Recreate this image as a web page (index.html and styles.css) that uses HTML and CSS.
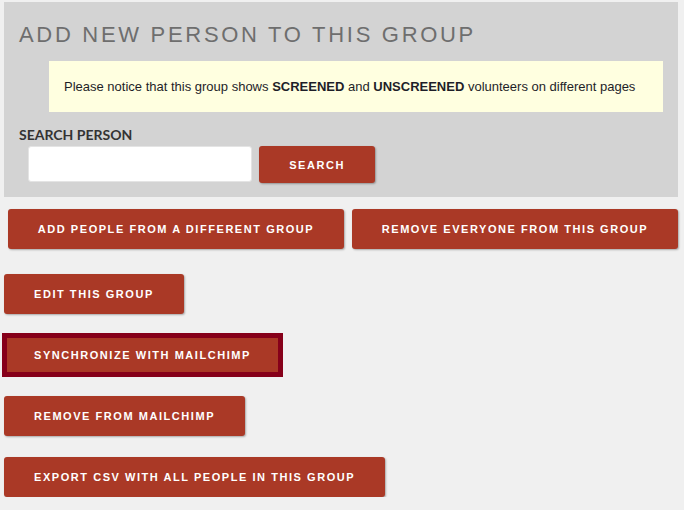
FILE: index.html
```html
<!DOCTYPE html>
<html lang="en">
<head>
    <meta charset="UTF-8">
    <meta name="viewport" content="width=device-width, initial-scale=1.0">
    <title>Group members</title>
    <link rel="stylesheet" href="styles.css">
</head>
<body>
    <div class="add-panel">
        <h1 class="panel-title">ADD NEW PERSON TO THIS GROUP</h1>

        <div class="notice">
            Please notice that this group shows <b>SCREENED</b> and <b>UNSCREENED</b> volunteers on different pages
        </div>

        <label class="search-label" for="personSearch">SEARCH PERSON</label>
        <div class="search-row">
            <input type="text" id="personSearch" class="search-input">
            <button class="btn btn-search">SEARCH</button>
        </div>
    </div>

    <div class="btn-row">
        <button class="btn">ADD PEOPLE FROM A DIFFERENT GROUP</button>
        <button class="btn">REMOVE EVERYONE FROM THIS GROUP</button>
    </div>

    <div class="btn-stack">
        <button class="btn">EDIT THIS GROUP</button>
        <button class="btn btn-active">SYNCHRONIZE WITH MAILCHIMP</button>
        <button class="btn">REMOVE FROM MAILCHIMP</button>
        <button class="btn">EXPORT CSV WITH ALL PEOPLE IN THIS GROUP</button>
    </div>
</body>
</html>
```

FILE: styles.css
```css
body {
    margin: 0;
    padding: 2px 6px 0 4px;
    background-color: #f0f0f0;
    font-family: "Liberation Sans", Arial, sans-serif;
}

.add-panel {
    background-color: #d3d3d3;
    padding: 20px 15px 14px 15px;
}

.panel-title {
    margin: 0;
    font-size: 22px;
    line-height: 26px;
    font-weight: normal;
    letter-spacing: 2.7px;
    color: #6e6e6e;
}

.notice {
    margin: 13px 0 0 30px;
    padding: 18px 15px 17px 15px;
    background-color: #ffffe0;
    font-size: 13px;
    line-height: 16px;
    color: #1e1e28;
}

.search-label {
    display: block;
    margin-top: 14px;
    font-family: Lato, sans-serif;
    font-weight: bold;
    font-size: 14px;
    line-height: 17px;
    color: #333;
}

.search-row {
    display: flex;
    align-items: flex-start;
    gap: 7px;
    margin: 3px 0 0 9px;
}

.search-input {
    box-sizing: border-box;
    width: 224px;
    height: 36px;
    border: 1px solid #e4e4e4;
    border-radius: 3px;
    background: #fff;
}

.btn {
    box-sizing: border-box;
    height: 40px;
    padding: 0 30px;
    border: none;
    border-radius: 3px;
    background-color: #aa3926;
    color: #fff;
    font-family: "Liberation Sans", Arial, sans-serif;
    font-weight: bold;
    font-size: 11px;
    letter-spacing: 1.55px;
    white-space: nowrap;
    box-shadow: 1px 1px 2px rgba(0, 0, 0, 0.3);
    cursor: pointer;
}

.btn-search {
    width: 116px;
    height: 37px;
    padding: 0;
}

.btn-active {
    border-radius: 0;
    outline: 2px solid #86001a;
    box-shadow: inset 0 0 0 3px #86001a;
}

.btn-row {
    display: flex;
    gap: 8px;
    margin-top: 12px;
    padding-left: 4px;
}

/* two buttons share the full row width */
.btn-row .btn {
    flex: 1 1 auto;
    padding: 0;
}

.btn-stack {
    display: flex;
    flex-direction: column;
    align-items: flex-start;
    gap: 21px;
    margin-top: 25px;
}
```
